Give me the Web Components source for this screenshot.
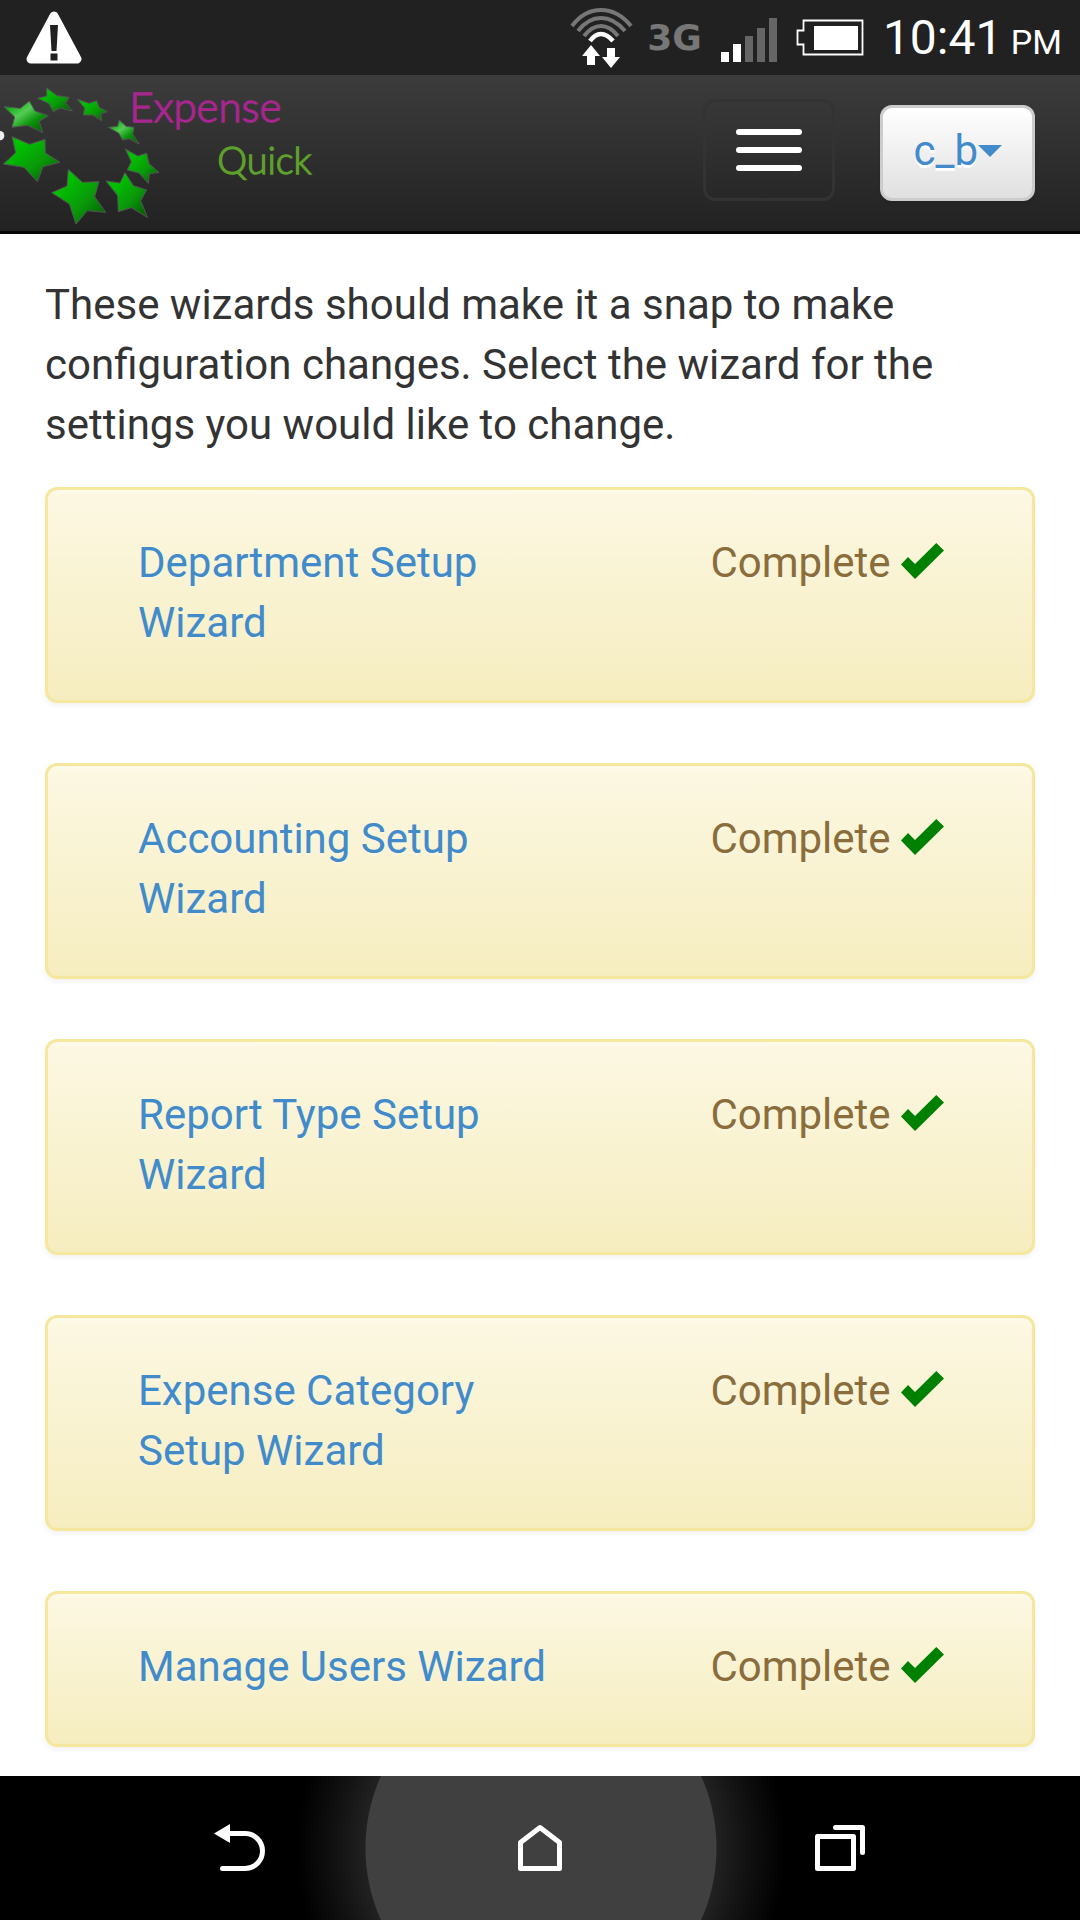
<!DOCTYPE html>
<html lang="en">
<head>
<meta charset="utf-8">
<meta name="viewport" content="width=device-width, initial-scale=1">
<title>Expense Quick</title>
<style>
  body { margin: 0; background: #fff; color: #333; font: 42px/60px Roboto, "Noto Sans", sans-serif; }
</style>
</head>
<body>
<app-screen>
  <status-bar slot="top" time="10:41" period="PM"></status-bar>
  <nav-bar slot="top" user="c_b"></nav-bar>
  <p slot="intro">These wizards should make it a snap to make configuration changes. Select the wizard for the settings you would like to change.</p>
  <wizard-card status="Complete">Department Setup Wizard</wizard-card>
  <wizard-card status="Complete">Accounting Setup Wizard</wizard-card>
  <wizard-card status="Complete">Report Type Setup Wizard</wizard-card>
  <wizard-card status="Complete">Expense Category Setup Wizard</wizard-card>
  <wizard-card status="Complete">Manage Users Wizard</wizard-card>
  <system-keys slot="bottom"></system-keys>
</app-screen>

<script>
class BaseElement extends HTMLElement {
  connectedCallback() {
    if (!this.shadowRoot) this.attachShadow({ mode: "open" }).innerHTML = this.render();
  }
}

customElements.define("app-screen", class extends BaseElement {
  render() {
    return `
      <style>
        :host { display: flex; flex-direction: column; min-height: 100vh; }
        main { flex: 1; padding: 41px 45px 24px; }
        ::slotted(p) { margin: 0 0 32px; }
        .list { display: flex; flex-direction: column; gap: 60px; }
      </style>
      <header><slot name="top"></slot></header>
      <main>
        <slot name="intro"></slot>
        <div class="list"><slot></slot></div>
      </main>
      <slot name="bottom"></slot>`;
  }
});

customElements.define("status-bar", class extends BaseElement {
  render() {
    return `
      <style>
        :host { display: flex; justify-content: space-between; align-items: center; height: 75px; padding: 0 18px 0 26px; background: #212121; color: #fff; }
        svg { display: block; }
        .right { display: flex; align-items: center; gap: 19px; }
        .net { font: bold 36px/40px "DejaVu Sans", sans-serif; color: #777; }
        .radio { display: flex; align-items: center; gap: 14px; }
        .time { padding-top: 5px; font-size: 48px; white-space: nowrap; }
        .time small { font-size: 34px; }
      </style>
      <svg width="56" height="54" viewBox="0 0 56 54" aria-hidden="true">
        <path d="M28 5 51 48H5Z" fill="#fff" stroke="#fff" stroke-width="9" stroke-linejoin="round"/>
        <path d="M24 14h8l-1.500 26h-5zM24.500 42.500h7v7h-7z" fill="#212121"/>
      </svg>
      <div class="right">
        <div class="radio">
          <svg width="63" height="60" viewBox="0 0 63 60" aria-hidden="true">
            <g fill="none" stroke="#777" stroke-width="4">
              <path d="M2 18Q14 2 31 2T61 18"/>
              <path d="M8 23Q18 10 31 10T55 23"/>
              <path d="M14 28Q22 18 31 18T48 28"/>
              <path d="M20 33Q25 26 31 26T43 33" stroke="#fff" stroke-width="4.500"/>
            </g>
            <path d="M21 37 30 48H25V57H17V48H12ZM41 60 32 49H37V40H45V49H50Z" fill="#fff"/>
          </svg>
          <span class="net">3G</span>
        </div>
        <svg width="56" height="48" viewBox="0 -4 56 48" aria-hidden="true">
          <path d="M0 34h8v10H0zM12 26h8v18h-8z" fill="#fff"/>
          <path d="M24 18h8v26h-8zM36 10h8v34h-8zM48 0h8v44h-8z" fill="#666"/>
        </svg>
        <svg width="68" height="37" viewBox="0 0 68 37" aria-hidden="true">
          <path d="M7.500 1.500H66.500V35.500H7.500V25.500H1.500V11.500H7.500Z" fill="none" stroke="#fff" stroke-width="1.800"/>
          <path d="M18 7h44v24H18z" fill="#fff"/>
        </svg>
        <span class="time">${this.getAttribute("time")}<small> ${this.getAttribute("period")}</small></span>
      </div>`;
  }
});

customElements.define("star-logo", class extends BaseElement {
  render() {
    const stars = [
      [[12,320],[88,303],[145,347],[128,397],[36,382]],
      [[140,264],[207,292],[217,333],[160,335],[113,295]],
      [[232,298],[290,302],[322,335],[305,362],[250,345]],
      [[325,382],[358,360],[402,382],[418,432],[368,420]],
      [[376,447],[440,460],[477,517],[445,550],[382,510]],
      [[375,518],[440,570],[442,652],[355,635],[318,543]],
      [[205,508],[297,545],[317,637],[228,672],[155,578]],
      [[36,410],[135,418],[180,487],[112,545],[10,492]]
    ];
    const outline = tips => {
      const cx = tips.reduce((s, t) => s + t[0], 0) / 5;
      const cy = tips.reduce((s, t) => s + t[1], 0) / 5;
      return tips.map((t, i) => {
        const n = tips[(i + 1) % 5];
        const ix = cx + ((t[0] + n[0]) / 2 - cx) * 0.66;
        const iy = cy + ((t[1] + n[1]) / 2 - cy) * 0.66;
        return `${t} ${Math.round(ix)},${Math.round(iy)}`;
      }).join(" ");
    };
    return `
      <style>
        :host { display: block; }
        svg { display: block; }
        text { font-family: Lato, sans-serif; font-weight: 300; stroke-width: 4; }
      </style>
      <svg width="320" height="156" viewBox="0 225 960 468" role="img" aria-label="Expense Quick">
        <defs>
          <linearGradient id="leaf" x1="0" y1="0" x2="1" y2="1">
            <stop offset=".25" stop-color="#00c000"/><stop offset=".6" stop-color="#0a990a"/><stop offset="1" stop-color="#005400"/>
          </linearGradient>
          <linearGradient id="shine" x1="0" y1="0" x2="1" y2="1">
            <stop offset=".1" stop-color="#0a0"/><stop offset=".4" stop-color="#5c5"/><stop offset=".65" stop-color="#0a930a"/><stop offset="1" stop-color="#005400"/>
          </linearGradient>
        </defs>
        <ellipse cx="0" cy="407" rx="13" ry="14" fill="#eee"/>
        ${stars.map((s, i) => `<polygon points="${outline(s)}" fill="url(#${i === 0 || i === 3 ? "shine" : "leaf"})" stroke="#555" stroke-width="3"/>`).join("")}
        <text x="388" y="365" font-size="126" fill="#a8268f" stroke="#a8268f">Expense</text>
        <text x="652" y="523" font-size="113" fill="#5fa02c" stroke="#5fa02c">Quick</text>
      </svg>`;
  }
});

customElements.define("nav-bar", class extends BaseElement {
  render() {
    return `
      <style>
        :host { display: flex; justify-content: space-between; background: linear-gradient(#3c3c3c, #222); border-bottom: 3px solid #080808; }
        .actions { display: flex; align-items: flex-end; gap: 45px; padding: 24px 45px 30px 0; }
        button { box-sizing: border-box; font: inherit; border-radius: 12px; cursor: pointer; }
        .toggle { display: flex; flex-direction: column; gap: 12px; padding: 27px 30px; border: 3px solid #333; background: none; }
        .toggle i { width: 66px; height: 6px; border-radius: 3px; background: #fff; }
        .user { display: flex; align-items: center; padding: 13px 30px 17px; border: 3px solid #ccc; background: linear-gradient(#fff, #e0e0e0); color: #428bca; text-shadow: 0 3px 0 #fff; box-shadow: inset 0 3px 0 rgba(255,255,255,.15), 0 3px 3px rgba(0,0,0,.075); }
        .caret { border: 12px solid transparent; border-top-color: #428bca; border-bottom: 0; }
      </style>
      <star-logo></star-logo>
      <div class="actions">
        <button class="toggle" type="button" aria-label="Toggle navigation"><i></i><i></i><i></i></button>
        <button class="user" type="button">${this.getAttribute("user")}<span class="caret"></span></button>
      </div>`;
  }
});

customElements.define("wizard-card", class extends BaseElement {
  render() {
    return `
      <style>
        :host { display: grid; grid-template-columns: 7fr 5fr; padding: 43px 45px 47px; border: 3px solid #f5e79e; border-radius: 12px; background: linear-gradient(#fcf8e3, #f6edbf); color: #8a6d3b; text-shadow: 0 3px 0 rgba(255,255,255,.2); box-shadow: inset 0 3px 0 rgba(255,255,255,.25), 0 3px 6px rgba(0,0,0,.05); }
        .name { padding: 0 45px; }
        .status { padding-right: 43px; text-align: right; white-space: nowrap; }
        a { color: #428bca; text-decoration: none; }
        svg { width: 43px; height: 36px; vertical-align: -2px; }
      </style>
      <div class="name"><a href="#"><slot></slot></a></div>
      <div class="status">${this.getAttribute("status")} <svg viewBox="0 0 43 36" aria-hidden="true"><path d="M0 21.500 7 14 14 21 35.300 0 43 7.500 14 36Z" fill="green"/></svg></div>`;
  }
});

customElements.define("system-keys", class extends BaseElement {
  render() {
    return `
      <style>
        :host { display: grid; grid-template-columns: repeat(3, 1fr); box-sizing: border-box; height: 144px; padding: 0 90px 3px; overflow: hidden;
          background: radial-gradient(circle at calc(50% + 1px) 50%, #404040 175px, #212121 176px, #121212 205px, #000 244px); }
        button { display: flex; align-items: center; justify-content: center; padding: 0; border: 0; background: none; cursor: pointer; }
        svg { fill: none; stroke: #fff; stroke-width: 5; stroke-linecap: round; stroke-linejoin: round; }
      </style>
      <button type="button" aria-label="Back"><svg width="52" height="48" viewBox="0 0 52 48"><path d="M14 10.500H31A17.500 17.500 0 0 1 31 45.500H8.500"/><path d="M0 10.500 16 1V20Z" fill="#fff" stroke="none"/></svg></button>
      <button type="button" aria-label="Home"><svg width="44" height="48" viewBox="0 0 44 48"><path d="M2.500 45.500V19.500L22 4.500 41.500 19.500V45.500Z"/></svg></button>
      <button type="button" aria-label="Recent apps"><svg width="50" height="48" viewBox="0 0 50 48"><path d="M2.500 13.500h36v32h-36zM20.500 4.500H47.500V29.500"/></svg></button>`;
  }
});
</script>
</body>
</html>
